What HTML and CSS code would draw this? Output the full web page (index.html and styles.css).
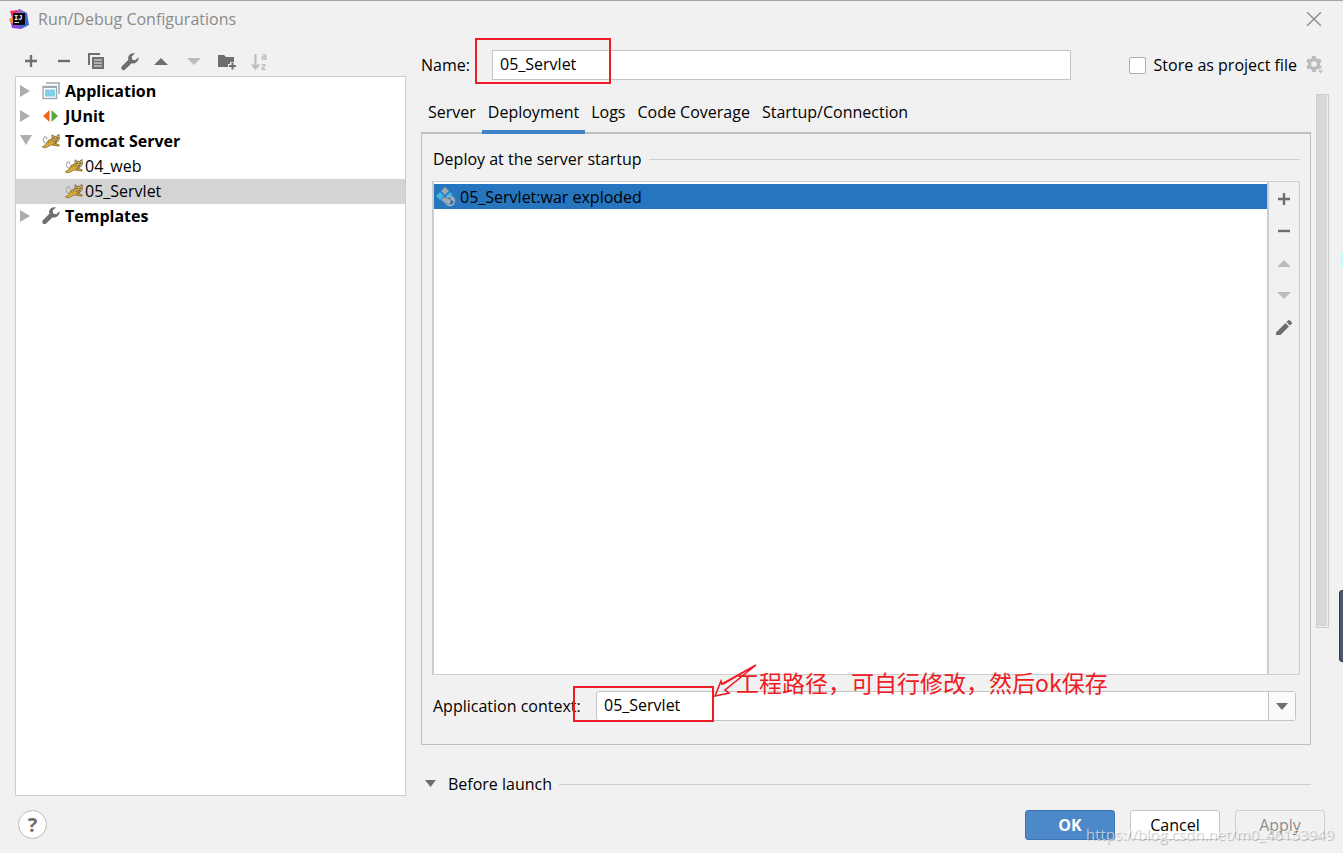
FILE: index.html
```html
<!DOCTYPE html>
<html lang="en">
<head>
<meta charset="utf-8">
<title>Run/Debug Configurations</title>
<link rel="stylesheet" href="styles.css">
</head>
<body>
<svg class="defs" aria-hidden="true">
  <symbol id="plus" viewBox="0 0 16 16"><path d="M8 2v12M2 8h12" stroke="#6e6e6e" stroke-width="2.4"/></symbol>
  <symbol id="minus" viewBox="0 0 16 16"><path d="M2 8h12" stroke="#6e6e6e" stroke-width="2.4"/></symbol>
  <symbol id="up" viewBox="0 0 16 16"><path d="M1 12l7-7 7 7z" fill="currentColor"/></symbol>
  <symbol id="down" viewBox="0 0 16 16"><path d="M1 5h14l-7 7z" fill="currentColor"/></symbol>
  <symbol id="right" viewBox="0 0 12 12"><path d="M0 0l10 6-10 6z" fill="#adadad"/></symbol>
  <symbol id="open" viewBox="0 0 12 12"><path d="M0 0h12L6 10z" fill="#adadad"/></symbol>
  <symbol id="wrench" viewBox="0 0 18 18"><path d="M17.500 4.200l-3.300 3-3-.700-.500-3L13.900.500C11 -.200 8.500 1 7.500 3.200c-.600 1.300-.500 2.500-.100 3.600L.900 13.300c-.900.900-.900 2.300 0 3.200s2.300.900 3.200 0l6.600-6.300c1.500.600 3.300.300 4.700-1 1.600-1.300 2.500-3.300 2.100-5z" fill="#6e6e6e"/></symbol>
  <symbol id="cat" viewBox="0 0 18 14">
    <path d="M5 9.500C1.500 9 .5 6 1.800 4S5.500 3 4.800 5.500" fill="none" stroke="#a9a9a9" stroke-width="1.100"/>
    <path d="M6 6.500l3.500-1.700 2 1.200 3 2.500-1.500 2-4 .5-4.500 2.500-3 .2-1.300-1L3.500 11z" fill="#d9ab38" stroke="#7d662e" stroke-width=".7"/>
    <path d="M10 .8l2 1.500h2.500L17 .5l.3 4.800-2 2.700h-3l-2.200-2.700z" fill="#e6c064" stroke="#5c523b" stroke-width=".8"/>
    <path d="M12.500 9l5 2-.6 1.200-6-1z" fill="#d39d2a" stroke="#6b5527" stroke-width=".6"/>
    <path d="M11.700 3.700h1v1.200h-1zm3 0h1v1.200h-1zM13.200 5.900h1.400v.9h-1.400zM6.500 6.500l.7 2.700M8.500 5.500l.6 2.700" fill="#222" stroke="#745714" stroke-width=".5"/>
  </symbol>
</svg>

<main class="dialog">
  <header class="titlebar">
    <svg class="logo" viewBox="0 0 20 20" aria-hidden="true">
      <path d="M1 2l7-1 7 6-6 10-8-4 2-4z" fill="#f52f63"/>
      <path d="M0 10l5-2 5 8-6 3-2-4z" fill="#f58a35"/>
      <path d="M10 0l8 4 2 12-8 4-7-4z" fill="#3569de"/>
      <path d="M2 14h8l2 6-9-1z" fill="#8e45d7"/>
      <path d="M10 0l6 3-4 3-6-1z" fill="#9460c5"/>
      <path d="M4 4h12v12H4z" fill="#080808"/>
      <text x="5" y="11" class="logo-text">IJ</text>
      <path d="M5.500 13.500H10" stroke="#ddd"/>
    </svg>
    <h1>Run/Debug Configurations</h1>
    <button class="icon-button close" aria-label="Close"><svg viewBox="0 0 14 14"><path d="M1 1l12 12M13 1L1 13" fill="none" stroke="#8b8b8b" stroke-width="1.200"/></svg></button>
  </header>

  <div class="body">
    <aside class="sidebar">
      <div class="toolbar">
        <button class="icon-button" aria-label="Add"><svg><use href="#plus"/></svg></button>
        <button class="icon-button" aria-label="Remove"><svg><use href="#minus"/></svg></button>
        <button class="icon-button" aria-label="Copy"><svg viewBox="0 0 16 16"><path d="M1 12V1h11" fill="none" stroke="#6e6e6e" stroke-width="2"/><path d="M4 4h12v12H4z" fill="#6e6e6e"/><path d="M6 7h8M6 10h8M6 13h8" stroke="#f1f1f1" stroke-width="1.200"/></svg></button>
        <button class="icon-button" aria-label="Edit templates"><svg class="wide"><use href="#wrench"/></svg></button>
        <button class="icon-button" aria-label="Move up"><svg><use href="#up"/></svg></button>
        <button class="icon-button dim" aria-label="Move down"><svg><use href="#down"/></svg></button>
        <button class="icon-button" aria-label="New folder"><svg class="wide" viewBox="0 0 18 18"><path d="M0 2h6l2 2h8v5h-4v2h-2v3H0z" fill="#6e6e6e"/><path d="M14.500 9.500v7M11 13h7" stroke="#6e6e6e" stroke-width="2"/></svg></button>
        <button class="icon-button dim" aria-label="Sort"><svg class="wide" viewBox="0 0 18 18"><path d="M4.500 1v14M1 11.500l3.500 4 3.500-4" fill="none" stroke="currentColor" stroke-width="2"/><text x="10" y="7" class="sort-text">a</text><text x="10" y="17" class="sort-text">z</text></svg></button>
      </div>
      <ul class="tree">
        <li class="node"><svg class="arrow"><use href="#right"/></svg><svg class="kind" viewBox="0 0 18 18"><path d="M4 1h13v11" fill="none" stroke="#b4bec5" stroke-width="2"/><path d="M1 4.500h13.500v12H1z" fill="#fff" stroke="#9dabb4" stroke-width="1.400"/><path d="M1 5h13.500" stroke="#9dabb4" stroke-width="2"/><path d="M3 7.500h10v7H3z" fill="#7fd0ea"/></svg>Application</li>
        <li class="node"><svg class="arrow"><use href="#right"/></svg><svg class="kind" viewBox="0 0 18 18"><path d="M7.500 3v12L1 9z" fill="#f26522"/><path d="M9.500 3v12L16 9z" fill="#59a83c"/></svg>JUnit</li>
        <li class="node"><svg class="arrow"><use href="#open"/></svg><svg class="kind"><use href="#cat"/></svg>Tomcat Server</li>
        <li class="node leaf"><svg class="kind"><use href="#cat"/></svg>04_web</li>
        <li class="node leaf selected"><svg class="kind"><use href="#cat"/></svg>05_Servlet</li>
        <li class="node"><svg class="arrow"><use href="#right"/></svg><svg class="kind"><use href="#wrench"/></svg>Templates</li>
      </ul>
    </aside>

    <section class="config">
      <div class="name-row">
        <label for="name">Name:</label>
        <div class="name-field"><input id="name" type="text" value="05_Servlet"><span class="mark name-mark"></span></div>
        <label class="store"><input type="checkbox">Store as project file</label>
        <button class="icon-button gear dim" aria-label="Storage settings"><svg viewBox="0 0 18 18"><path fill="currentColor" fill-rule="evenodd" d="M6.200 0h3.600l.5 2.300 1.500.9 2.200-.8 1.800 3.200L14 7.200v1.700l1.800 1.500-1.800 3.100-2.200-.7-1.500.9-.5 2.300H6.200l-.5-2.300-1.500-.9-2.200.7-1.800-3.100L2 8.900V7.200L.2 5.600 2 2.400l2.200.8 1.500-.9zM8 5.200a2.800 2.800 0 100 5.600 2.800 2.800 0 000-5.600z"/><path d="M11 14h7l-3.500 4z" fill="currentColor" stroke="#f1f1f1" stroke-width=".8"/></svg></button>
      </div>

      <div class="scroll">
        <div class="content">
          <div class="tabs" role="tablist">
            <button role="tab">Server</button>
            <button role="tab" class="active" aria-selected="true">Deployment</button>
            <button role="tab">Logs</button>
            <button role="tab">Code Coverage</button>
            <button role="tab">Startup/Connection</button>
          </div>
          <div class="panel">
            <h2 class="section-title">Deploy at the server startup</h2>
            <div class="deploy">
              <ul class="artifacts">
                <li><svg viewBox="0 0 20 20" aria-hidden="true"><path d="M9 0l4 4-4 4-4-4z" fill="#9aa7b0"/><path d="M4 5l4 4-4 4-4-4z" fill="#40b6e0"/><path d="M14 5l3 3-4 1-2 1-1-1z" fill="#40b6e0"/><path d="M8 10l2 2-1 4-4-3z" fill="#9aa7b0"/><circle cx="14" cy="14" r="4.500" fill="#3d78aa" stroke="#a8b3ba" stroke-width="1.400"/><path d="M10.500 12l3 .2 1.500 2-1.500 1.500v2l-3-2.300zM14 10l3.500 1.500.5 2.500-3-1z" fill="#a8b3ba"/></svg>05_Servlet:war exploded</li>
              </ul>
              <div class="side-tools">
                <button class="icon-button" aria-label="Add artifact"><svg><use href="#plus"/></svg></button>
                <button class="icon-button" aria-label="Remove artifact"><svg><use href="#minus"/></svg></button>
                <button class="icon-button dim" aria-label="Artifact up"><svg><use href="#up"/></svg></button>
                <button class="icon-button dim" aria-label="Artifact down"><svg><use href="#down"/></svg></button>
                <button class="icon-button" aria-label="Edit artifact"><svg viewBox="0 0 16 16"><path d="M0 13.500L9.500 4 13 7.500 4 16.500H0zM10.500 3L12 1.500q1-.9 2 0l1.500 1.500q.9 1 0 2L14 6.500z" fill="#6e6e6e"/></svg></button>
              </div>
            </div>
            <div class="context-row">
              <label for="context">Application context:</label>
              <div class="combo">
                <input id="context" type="text" value="05_Servlet">
                <button aria-label="Show contexts"><svg viewBox="0 0 12 8"><path d="M0 1h12L6 8z" fill="#6e6e6e"/></svg></button>
                <span class="mark context-mark"></span>
                <svg class="pointer" viewBox="0 0 44 36" aria-hidden="true"><path d="M42 2L8 21l-1-3-6 15 14-3-4-3L42 2 9 21" fill="none" stroke="#ed1c24" stroke-width="1.600"/></svg>
                <p class="note" lang="zh">工程路径，可自行修改，然后ok保存</p>
              </div>
            </div>
          </div>
          <h2 class="section-title before"><svg viewBox="0 0 12 8" aria-hidden="true"><path d="M0 0h11L5.500 7z" fill="#6e6e6e"/></svg>Before launch</h2>
        </div>
        <div class="scrollbar"><div class="thumb"></div></div>
      </div>
    </section>
  </div>

  <footer class="footer">
    <button class="help" aria-label="Help">?</button>
    <button class="button primary">OK</button>
    <button class="button">Cancel</button>
    <button class="button disabled" disabled>Apply</button>
  </footer>
  <span class="watermark">https://blog.csdn.net/m0_46153949</span>
  <span class="edge-handle"></span>
  <span class="edge-glow"></span>
</main>
</body>
</html>
```
FILE: styles.css
```css
* { box-sizing: border-box; }

body {
  margin: 0;
  background: #f1f1f1;
  color: #000;
  font: 16px/24px "Open Sans", "Noto Sans CJK SC", sans-serif;
}

button, input { font: inherit; color: inherit; }
button { padding: 0; border: 0; background: none; }
h1, h2, ul, p { margin: 0; padding: 0; font-size: inherit; font-weight: 400; list-style: none; }
svg { display: block; flex: none; }
.defs { position: absolute; width: 0; height: 0; }

.dialog {
  position: relative;
  display: flex;
  flex-direction: column;
  min-height: 100vh;
  overflow: hidden;
  border-top: 1px solid #a6a6a6;
}

.titlebar {
  display: flex;
  align-items: center;
  gap: 9px;
  height: 37px;
  padding: 0 21px 1px 9px;
  color: #8b8b8b;
}
.logo { width: 20px; height: 20px; }
.logo-text { font: bold 7px "Liberation Mono", monospace; fill: #fff; }
.close { margin-left: auto; }
.close svg { width: 14px; height: 14px; }

.icon-button { display: grid; place-items: center; width: 16px; height: 16px; color: #6e6e6e; }
.icon-button svg { width: 16px; height: 16px; }
.icon-button svg.wide, .gear svg { width: 18px; height: 18px; overflow: visible; }
.dim { color: #bcbcbc; }
.sort-text { font: bold 10px "Open Sans", sans-serif; fill: currentColor; }

.body { display: flex; flex: 1; gap: 15px; padding: 0 14px 0 15px; }

.sidebar { display: flex; flex-direction: column; flex: 0 0 391px; }
.toolbar {
  display: flex;
  align-items: center;
  justify-content: space-between;
  width: 244px;
  height: 38px;
  margin-left: 8px;
  padding-top: 8px;
}
.tree { flex: 1; padding-top: 2px; border: 1px solid #cdcdcd; background: #fff; }
.node {
  display: flex;
  align-items: center;
  gap: 5px;
  height: 25px;
  padding: 0 0 2px 4px;
  font-weight: 700;
}
.arrow { width: 12px; height: 12px; margin-right: 5px; }
.kind { width: 18px; height: 18px; }
.leaf { gap: 2px; padding-left: 49px; font-weight: 400; }
.selected { background: #d4d4d4; }

.config { display: flex; flex: 1; flex-direction: column; min-width: 0; padding-top: 12px; }
.name-row { display: flex; align-items: center; padding-right: 5px; }
.name-row > label:first-child { flex: 0 0 71px; }
.name-field { position: relative; flex: 1; }
.name-field input {
  display: block;
  width: 100%;
  height: 30px;
  padding: 0 7px 2px;
  border: 1px solid #c4c4c4;
  background: #fff;
}
.mark { position: absolute; border: 2px solid #ed1c24; pointer-events: none; }
.name-mark { left: -17px; top: -12px; width: 136px; height: 46px; }
.store { display: flex; align-items: center; gap: 8px; margin-left: 58px; }
.store input {
  appearance: none;
  width: 17px;
  height: 17px;
  margin: 0;
  border: 1px solid #b0b0b0;
  border-radius: 2px;
  background: #fff;
}
.gear { width: 18px; height: 18px; margin-left: 9px; }

.scroll { display: flex; flex: 1; gap: 5px; margin-top: 14px; }
.content { display: flex; flex: 1; flex-direction: column; min-width: 0; }
.scrollbar { width: 13px; }
.thumb { height: 76%; border: 1px solid #cdcdcd; box-shadow: inset -1px -1px #f1f1f1; background: #d8d8d8; }

.tabs { display: flex; height: 40px; padding-left: 1px; border-bottom: 2px solid #bfbfbf; }
.tabs button { height: 40px; padding: 0 6px; border-bottom: 4px solid transparent; }
.tabs .active { border-bottom-color: #4083c9; }

.panel {
  display: flex;
  flex: 1;
  flex-direction: column;
  padding: 13px 10px 23px;
  border: 1px solid #bfbfbf;
  border-top: 0;
}
.section-title { display: flex; align-items: center; gap: 7px; padding-left: 1px; }
.section-title::after { content: ""; flex: 1; height: 1px; background: #cfcfcf; }
.deploy { display: flex; flex: 1; margin-top: 10px; border: 1px solid #cdcdcd; border-left-width: 2px; }
.artifacts { flex: 1; padding-top: 2px; border-right: 2px solid #cdcdcd; background: #fff; }
.artifacts li {
  display: flex;
  align-items: center;
  gap: 4px;
  height: 25px;
  padding-left: 2px;
  background: #2675bf;
}
.artifacts svg { width: 20px; height: 20px; }
.side-tools { display: flex; flex-direction: column; align-items: center; gap: 16px; width: 30px; padding-top: 9px; }

.context-row { display: flex; align-items: center; margin-top: 16px; padding: 0 4px 0 1px; }
.context-row > label { flex: 0 0 163px; }
.combo {
  position: relative;
  display: flex;
  flex: 1;
  height: 30px;
  border: 1px solid #c4c4c4;
  border-radius: 3px;
  background: #fff;
}
.combo input { flex: 1; min-width: 0; padding: 0 7px 2px; border: 0; background: transparent; }
.combo button {
  display: grid;
  place-items: center;
  width: 27px;
  border-left: 1px solid #c4c4c4;
  background: #fafafa;
}
.combo button svg { width: 12px; height: 8px; }
.context-mark { left: -24px; top: -6px; width: 141px; height: 36px; }
.pointer { position: absolute; left: 117px; top: -29px; width: 44px; height: 36px; }
.note {
  position: absolute;
  left: 139px;
  top: -26px;
  color: #ed1c24;
  font: 23px/32px "Noto Sans CJK SC", sans-serif;
  white-space: nowrap;
}

.before { margin-top: 27px; padding-left: 4px; }
.before svg { width: 12px; height: 8px; margin-right: 4px; }

.footer { display: flex; align-items: center; gap: 15px; height: 57px; padding: 0 18px; }
.help {
  width: 29px;
  height: 29px;
  margin-right: auto;
  border: 1px solid #bcbcbc;
  border-radius: 50%;
  background: #fff;
  color: #6e6e6e;
  font-size: 20px;
  font-weight: 700;
  line-height: 26px;
}
.button {
  width: 90px;
  height: 30px;
  border: 1px solid #c4c4c4;
  border-radius: 3px;
  background: #fff;
}
.primary { border-color: #3d75b2; background: #4d89c9; color: #fff; font-weight: 700; }
.disabled { border-color: #cfcfcf; background: #f1f1f1; color: #8c8c8c; }

.watermark {
  position: absolute;
  right: 9px;
  bottom: 7px;
  color: rgba(255, 255, 255, .6);
  font-size: 15px;
  text-shadow: 1px 1px 1px rgba(0, 0, 0, .25);
  pointer-events: none;
}
.edge-handle {
  position: absolute;
  right: -4px;
  top: 589px;
  width: 8px;
  height: 72px;
  border: 1px solid #303846;
  border-radius: 3px;
  background: #4d566a;
}
.edge-glow { position: absolute; right: -14px; top: 244px; width: 16px; height: 28px; border-radius: 50%; background: #c5fafa; }
```
